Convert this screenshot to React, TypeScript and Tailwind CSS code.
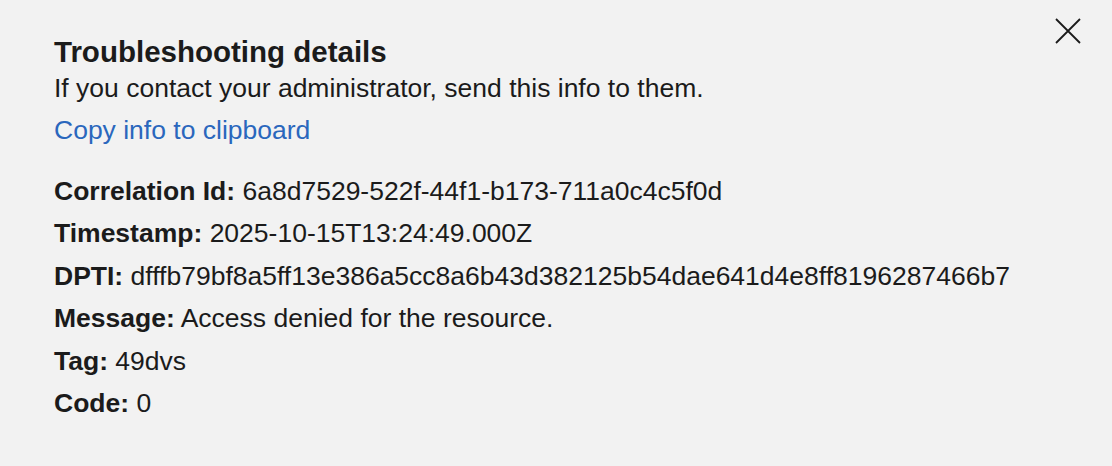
const rows = [
  { label: "Correlation Id:", value: "6a8d7529-522f-44f1-b173-711a0c4c5f0d" },
  { label: "Timestamp:", value: "2025-10-15T13:24:49.000Z" },
  { label: "DPTI:", value: "dfffb79bf8a5ff13e386a5cc8a6b43d382125b54dae641d4e8ff8196287466b7" },
  { label: "Message:", value: "Access denied for the resource." },
  { label: "Tag:", value: "49dvs" },
  { label: "Code:", value: "0" },
];

const App = () => {
  return (
    <div
      className="relative w-[1112px] h-[466px] bg-[#f2f2f2] text-[#1b1b1b] overflow-hidden"
      style={{ fontFamily: '"Liberation Sans", Arial, sans-serif' }}
    >
      {/* Close */}
      <button className="absolute top-[18px] right-[31px] text-[#1b1b1b]" aria-label="Close">
        <svg width="26" height="26" viewBox="0 0 26 26" fill="none" stroke="currentColor" strokeWidth="1.8">
          <path d="M1 1L25 25M25 1L1 25" />
        </svg>
      </button>

      <div className="pl-[54px] pt-[34px]">
        <h2 className="text-[29.5px] leading-[36px] font-bold">Troubleshooting details</h2>
        <p className="text-[26.5px] leading-[36px]">
          If you contact your administrator, send this info to them.
        </p>
        <a href="#" className="block mt-[6px] text-[26.5px] leading-[36px] text-[#2a67bd]">
          Copy info to clipboard
        </a>

        {/* Details */}
        <div className="mt-[25px] flex flex-col gap-[6.4px] text-[26.5px] leading-[36px]">
          {rows.map((r) => (
            <div key={r.label}>
              <span className="font-bold">{r.label}</span> {r.value}
            </div>
          ))}
        </div>
      </div>
    </div>
  );
};

export default App;
